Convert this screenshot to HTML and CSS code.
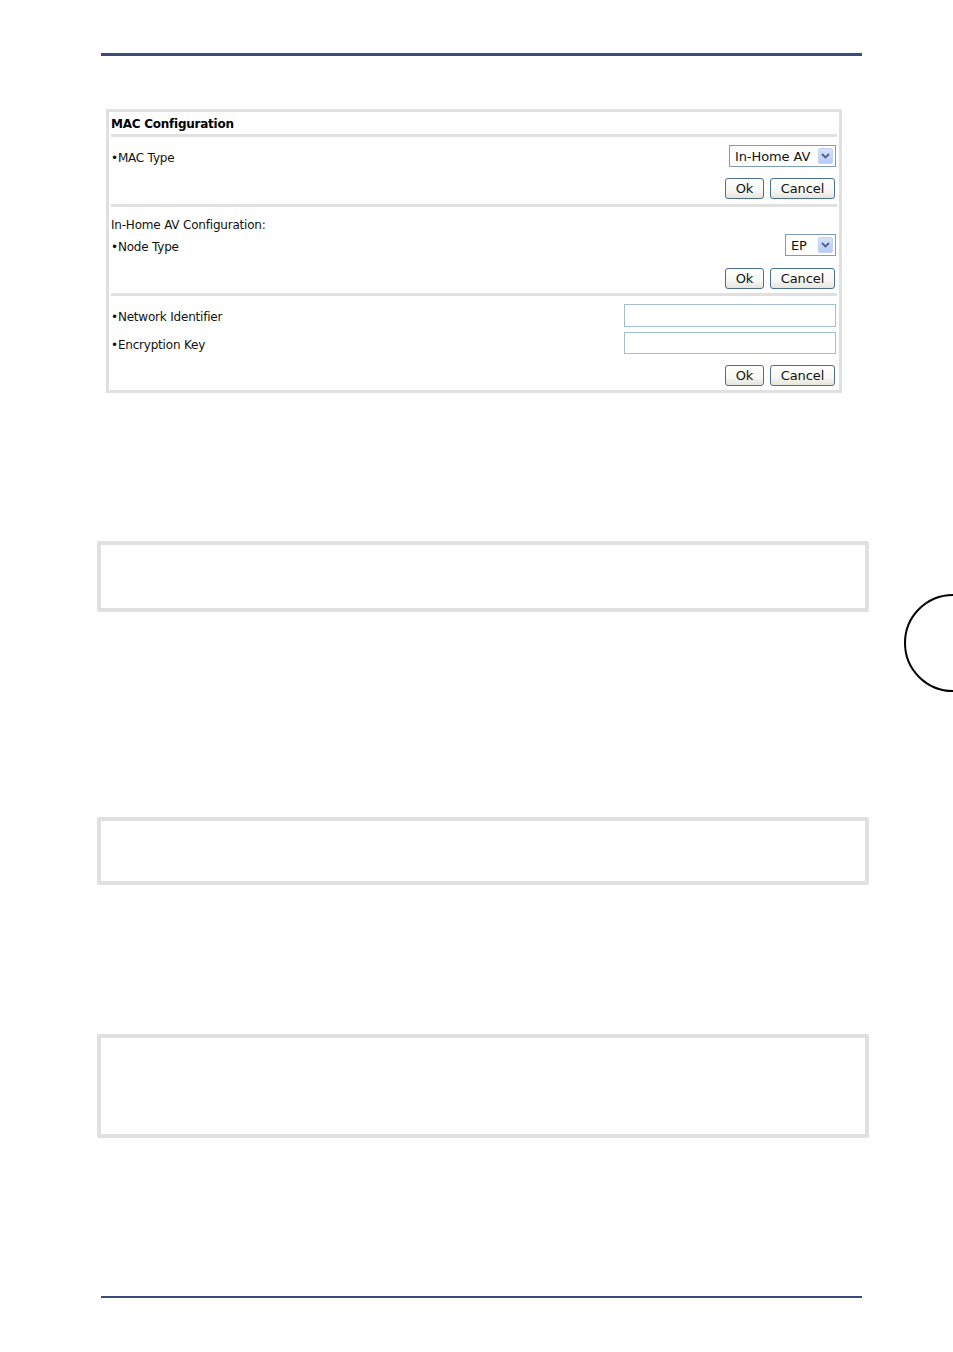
FILE: index.html
```html
<!DOCTYPE html>
<html>
<head>
<meta charset="utf-8">
<link rel="stylesheet" href="styles.css">
</head>
<body>
<div class="page">
  <div class="rule rule-top"></div>

  <div class="panel">
    <div class="panel-title">MAC Configuration</div>
    <div class="sep"></div>

    <div class="section s1">
      <div class="row r22">
        <span class="label">•MAC Type</span>
        <span class="select sel-mac"><span class="sel-text">In-Home AV</span><span class="arrow"><svg width="9" height="6" viewBox="0 0 9 6"><path d="M1 1 L4.5 4.5 L8 1" fill="none" stroke="#4d6185" stroke-width="1.8"/></svg></span></span>
      </div>
      <div class="row btns gap11">
        <span class="btn ok">Ok</span><span class="btn cancel">Cancel</span>
      </div>
    </div>
    <div class="sep"></div>

    <div class="section s2">
      <div class="row r20"><span class="label">In-Home AV Configuration:</span></div>
      <div class="row r22 gap1">
        <span class="label">•Node Type</span>
        <span class="select sel-ep"><span class="sel-text">EP</span><span class="arrow"><svg width="9" height="6" viewBox="0 0 9 6"><path d="M1 1 L4.5 4.5 L8 1" fill="none" stroke="#4d6185" stroke-width="1.8"/></svg></span></span>
      </div>
      <div class="row btns gap12">
        <span class="btn ok">Ok</span><span class="btn cancel">Cancel</span>
      </div>
    </div>
    <div class="sep"></div>

    <div class="section s3">
      <div class="row r23">
        <span class="label">•Network Identifier</span>
        <span class="input"></span>
      </div>
      <div class="row r22 gap5">
        <span class="label">•Encryption Key</span>
        <span class="input"></span>
      </div>
      <div class="row btns gap11">
        <span class="btn ok">Ok</span><span class="btn cancel">Cancel</span>
      </div>
    </div>
  </div>

  <div class="box box1"></div>
  <div class="box box2"></div>
  <div class="box box3"></div>

  <div class="rule rule-bottom"></div>
</div>
<svg class="tab-circle" width="50" height="100" viewBox="0 0 50 100"><circle cx="50" cy="50" r="48" fill="none" stroke="#000" stroke-width="2"/></svg>
</body>
</html>
```

FILE: styles.css
```css
html, body {
  margin: 0;
  padding: 0;
  background: #ffffff;
  overflow: hidden;
}
body {
  width: 953px;
  height: 1352px;
  position: relative;
  font-family: "DejaVu Sans", Tahoma, sans-serif;
  font-size: 12px;
  color: #000;
}
.page {
  padding-top: 53px;
}
.rule {
  margin-left: 101px;
  width: 761px;
  background: #3a4d78;
}
.rule-top {
  height: 3px;
}
.rule-bottom {
  height: 2px;
  margin-top: 158px;
}

.panel {
  margin-top: 53px;
  margin-left: 106px;
  width: 730px;
  border: 3px solid #e0e0e0;
  padding: 0;
}
.panel-title {
  height: 22px;
  line-height: 24px;
  padding-left: 2px;
  font-weight: bold;
  font-size: 12px;
  letter-spacing: -0.25px;
}
.sep {
  height: 3px;
  margin: 0 2px;
  background: #e0e0e0;
}
.section {
  padding: 0 3px 0 2px;
}
.s1 { padding-top: 8px; padding-bottom: 5px; }
.s2 { padding-top: 6px; padding-bottom: 4px; }
.s3 { padding-top: 8px; padding-bottom: 4px; }

.row {
  display: flex;
  justify-content: space-between;
  align-items: center;
}
.r20 { height: 20px; }
.r22 { height: 22px; }
.r23 { height: 23px; }
.gap1 { margin-top: 1px; }
.gap5 { margin-top: 5px; }
.gap11 { margin-top: 11px; }
.gap12 { margin-top: 12px; }

.label {
  letter-spacing: -0.2px;
  padding-top: 3px;
  color: #111;
}

.select {
  box-sizing: border-box;
  height: 22px;
  border: 1px solid #7f9db9;
  background: #fff;
  display: flex;
  align-items: center;
  justify-content: space-between;
  padding: 0 2px 0 5px;
  font-size: 13px;
  letter-spacing: -0.1px;
  color: #111;
}
.sel-mac { width: 107px; }
.sel-ep { width: 51px; }
.arrow {
  width: 15px;
  height: 16px;
  box-sizing: border-box;
  background: linear-gradient(#d6e2fb, #b7cbf5);
  border: 1px solid #c3d3f7;
  border-radius: 2px;
  display: flex;
  align-items: center;
  justify-content: center;
}

.btns {
  justify-content: flex-end;
  gap: 6px;
  padding-right: 1px;
}
.btn {
  box-sizing: border-box;
  height: 21px;
  border: 1px solid #4a6f93;
  border-radius: 3px;
  background: linear-gradient(#ffffff 0%, #f7f7f4 60%, #e6e4dc 100%);
  display: flex;
  align-items: center;
  justify-content: center;
  font-size: 13px;
  letter-spacing: -0.1px;
  color: #111;
}
.ok { width: 39px; }
.cancel { width: 65px; }

.input {
  box-sizing: border-box;
  width: 212px;
  height: 100%;
  border: 1px solid #a5bcd5;
  background: #fff;
}

.box {
  margin-left: 97px;
  width: 764px;
  border: 4px solid #e0e0e0;
  border-radius: 2px;
  background: #fff;
}
.box1 { margin-top: 148px; height: 63px; }
.box2 { margin-top: 205px; height: 60px; }
.box3 { margin-top: 149px; height: 96px; }

.tab-circle {
  position: absolute;
  left: 903px;
  top: 593px;
  display: block;
}
```
